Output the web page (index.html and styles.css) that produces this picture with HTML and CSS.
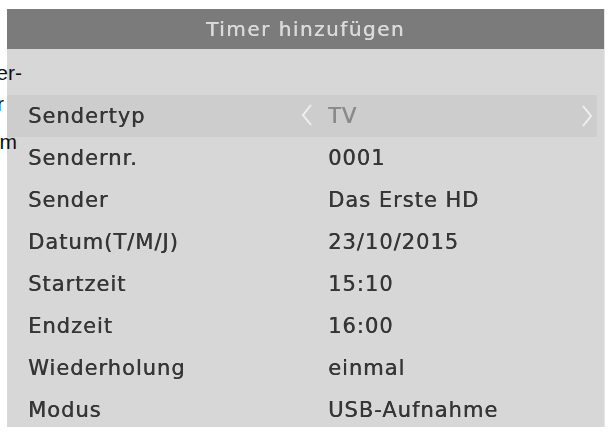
FILE: index.html
```html
<!DOCTYPE html>
<html lang="de">
<head>
<meta charset="utf-8">
<title>Timer hinzufügen</title>
<link rel="stylesheet" href="styles.css">
</head>
<body>
<div class="panel">
  <div class="header">Timer hinzufügen</div>
  <div class="rows">
    <div class="row active">
      <span class="label">Sendertyp</span>
      <span class="value">
        <svg class="arrow left" width="12" height="22" viewBox="0 0 12 22"><path d="M10 1 L2 11 L10 21" fill="none" stroke="#f0f0f0" stroke-width="2"/></svg>
        <span class="tv">TV</span>
      </span>
      <svg class="arrow right" width="12" height="22" viewBox="0 0 12 22"><path d="M2 1 L10 11 L2 21" fill="none" stroke="#f0f0f0" stroke-width="2"/></svg>
    </div>
    <div class="row"><span class="label">Sendernr.</span><span class="value">0001</span></div>
    <div class="row"><span class="label">Sender</span><span class="value">Das Erste HD</span></div>
    <div class="row"><span class="label">Datum(T/M/J)</span><span class="value">23/10/2015</span></div>
    <div class="row"><span class="label">Startzeit</span><span class="value">15:10</span></div>
    <div class="row"><span class="label">Endzeit</span><span class="value">16:00</span></div>
    <div class="row"><span class="label">Wiederholung</span><span class="value">einmal</span></div>
    <div class="row"><span class="label">Modus</span><span class="value">USB-Aufnahme</span></div>
  </div>
</div>
<div class="side">
  <span class="s1">er-</span>
  <span class="s2">r</span>
  <span class="s3">m</span>
</div>
</body>
</html>
```
FILE: styles.css
```css
html, body {
  margin: 0;
  padding: 0;
  background: #ffffff;
}
body {
  width: 609px;
  height: 432px;
  overflow: hidden;
  position: relative;
  font-family: "DejaVu Sans", sans-serif;
}
.panel {
  margin: 9px 0 0 7px;
  width: 597px;
  height: 418px;
  background: #d7d7d7;
  overflow: hidden;
  border-right: 1px solid #e6e6e6;
}
.header {
  height: 40px;
  background: #7b7b7b;
  color: #dadada;
  font-size: 20px;
  letter-spacing: 1.5px;
  line-height: 40px;
  text-align: center;
  text-shadow: 0.4px 0 0 #dadada;
  filter: blur(0.5px);
}
.rows {
  padding-top: 46px;
}
.row {
  height: 42px;
  display: flex;
  align-items: center;
  position: relative;
  color: #363636;
  font-size: 21px;
  letter-spacing: 1px;
}
.row.active {
  background: #cdcdcd;
  margin-right: 7px;
}
.label {
  width: 300px;
  padding-left: 21px;
  text-shadow: 0.4px 0 0 #363636;
  filter: blur(0.5px);
}
.value {
  text-shadow: 0.4px 0 0 #363636;
  filter: blur(0.5px);
}
.active .value {
  position: relative;
}
.tv {
  color: #8a8a8a;
  text-shadow: 0.4px 0 0 #8a8a8a;
}
.arrow {
  filter: blur(0.5px);
}
.arrow.left {
  position: absolute;
  left: -27px;
  top: 0px;
}
.arrow.right {
  position: absolute;
  right: 4px;
  top: 10px;
}
.side {
  position: absolute;
  left: 0;
  top: 0;
  font-family: "Liberation Sans", sans-serif;
  font-size: 21px;
  color: #111111;
}
.side span {
  position: absolute;
  right: -22px;
  white-space: nowrap;
}
.s1 { top: 61px; }
.s2 { top: 92px; right: -4px !important; }
.s3 { top: 130px; right: -17px !important; }
```
